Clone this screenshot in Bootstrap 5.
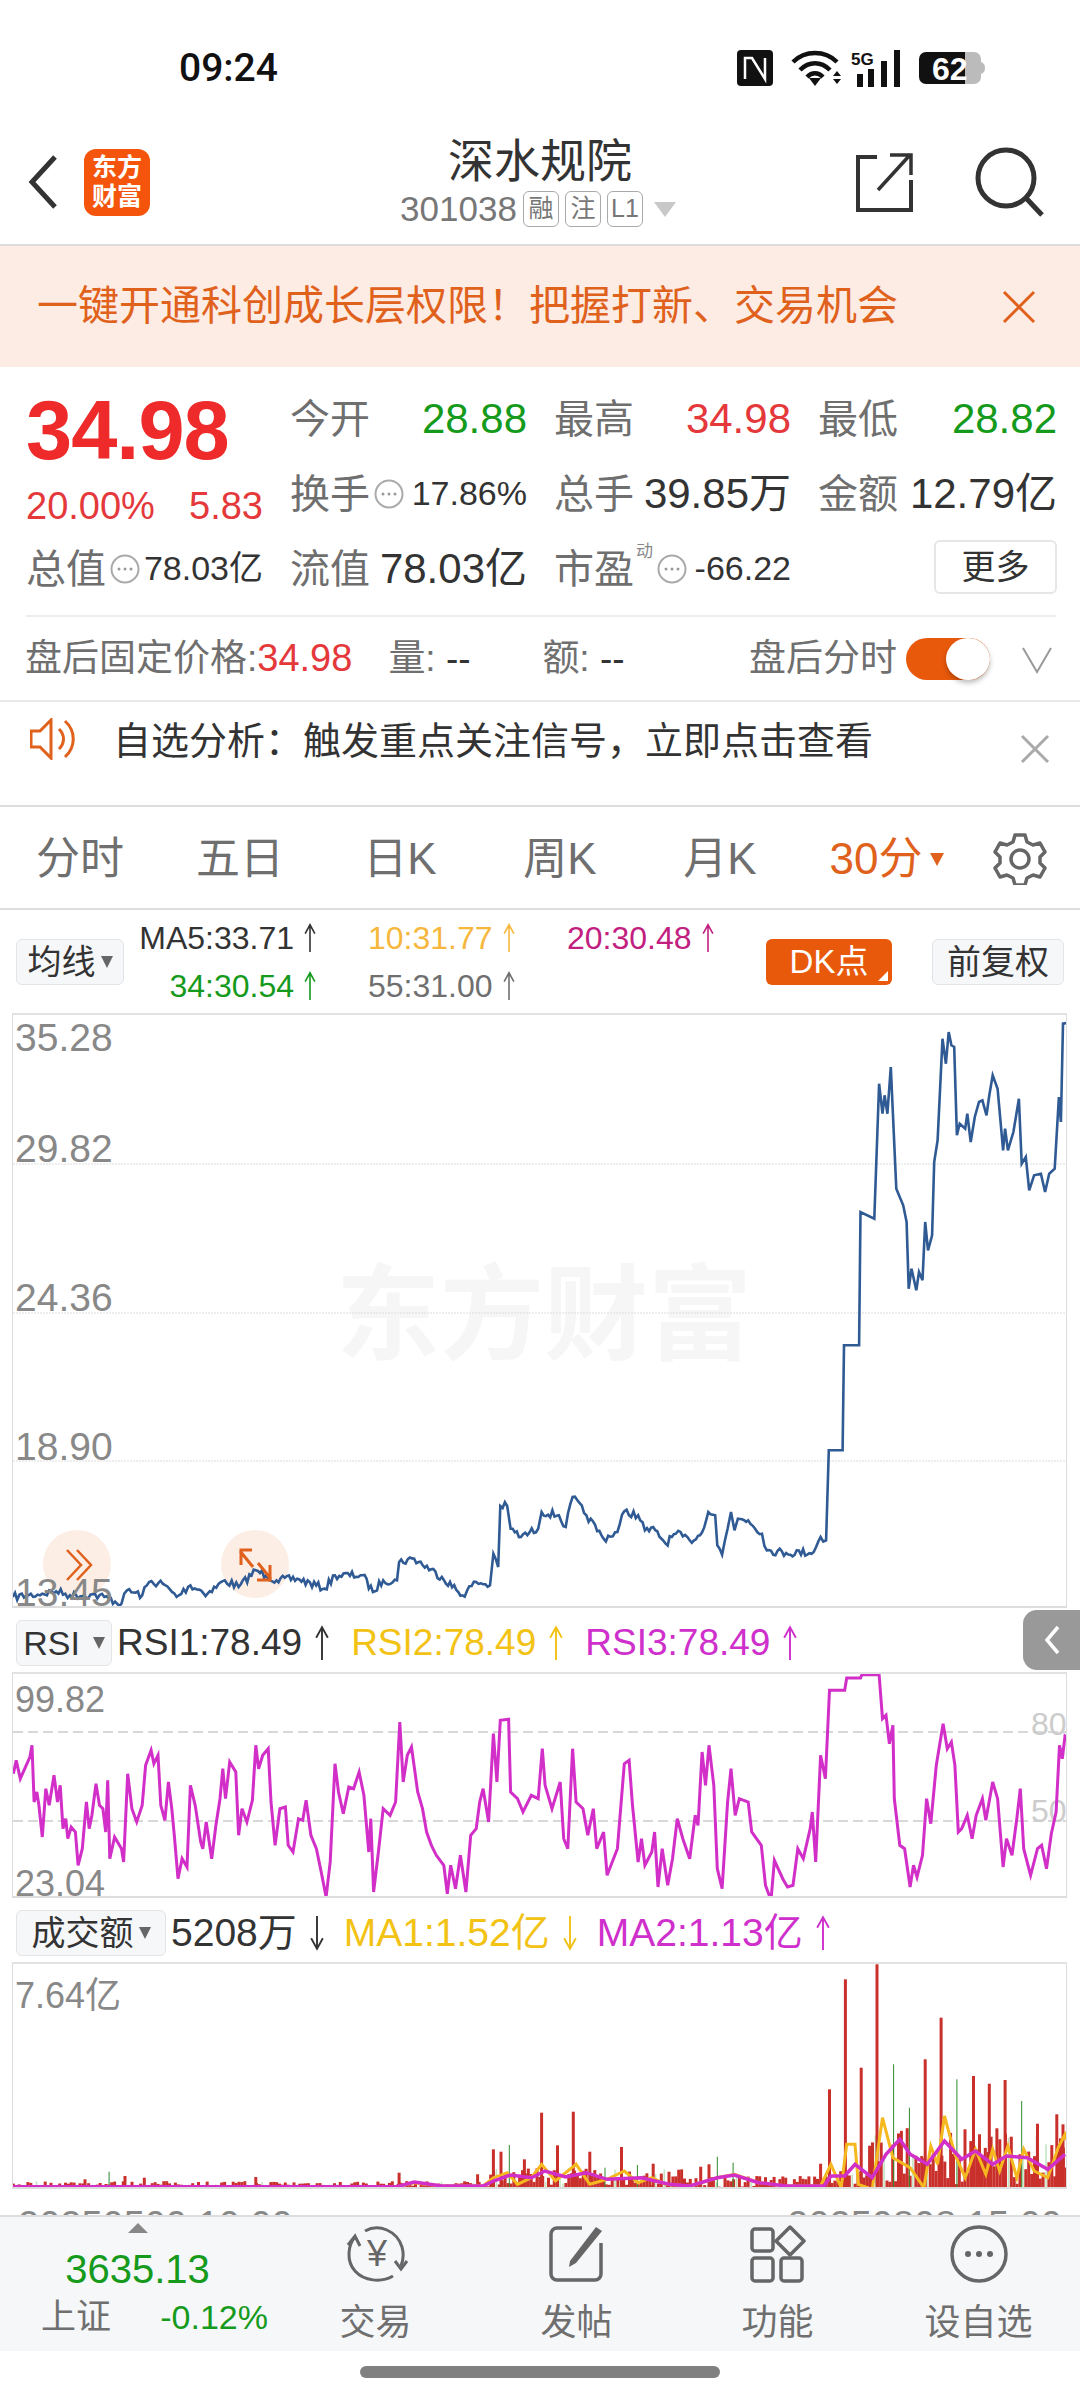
<!DOCTYPE html>
<html lang="zh-CN">
<head>
<meta charset="UTF-8">
<meta name="viewport" content="width=device-width, initial-scale=1.0">
<title>深水规院</title>
<link href="https://cdn.jsdelivr.net/npm/bootstrap@5.3.0/dist/css/bootstrap.min.css" rel="stylesheet">
<style>
body { width: 1080px; height: 2400px; margin: 0; overflow: hidden; background: #fff; color: #333; font-family: "Liberation Sans", "Noto Sans CJK SC", sans-serif; }
svg { display: block; flex: none; }
svg text { font-family: "Liberation Sans", "Noto Sans CJK SC", sans-serif; }
.c-red { color: #e5383b; }
.c-green { color: #159a1c; }
.c-gray { color: #6f6f6f; }
.c-dark { color: #333; }

.status-bar { height: 120px; padding: 50px 95px 0 179px; }
.clock { font-family: Roboto, "Liberation Sans", sans-serif; font-weight: 500; font-size: 39px; line-height: 36px; color: #111; }
.nfc-gap { margin-left: 18px; }

.head-bar { height: 126px; border-bottom: 2px solid #ddd; }
.head-side { width: 260px; flex: none; }
.back-wrap { padding-left: 28px; gap: 26px; }
.right-wrap { padding-right: 35px; gap: 60px; }
.logo-box { width: 66px; height: 67px; border-radius: 12px; background: #f4540c; color: #fff; font-size: 25px; line-height: 29px; font-weight: 700; text-align: center; padding-top: 4px; }
.head-title { font-size: 46px; line-height: 56px; color: #333; margin-top: -2px; }
.head-sub { font-size: 35px; line-height: 40px; color: #777; gap: 6px; padding-right: 4px; }
.tag-box { height: 36px; min-width: 36px; padding: 0 2px; border: 1px solid #aaa; border-radius: 6px; font-size: 25px; line-height: 33px; text-align: center; color: #777; }
.tag-arrow { width: 0; height: 0; border-left: 11px solid transparent; border-right: 11px solid transparent; border-top: 15px solid #c8c8c8; margin-left: 5px; }

.promo { height: 121px; background: #fcece4; color: #e0611c; font-size: 41px; padding: 0 44px 0 37px; white-space: nowrap; }

.q-grid { height: 250px; margin: 0 24px 0 26px; padding-top: 14px; border-bottom: 2px solid #eee; display: grid; grid-template-columns: 237px 237px 237px 239px; column-gap: 27px; grid-template-rows: 75px 75px 75px; }
.q-cell { display: flex; align-items: center; justify-content: space-between; font-size: 42px; white-space: nowrap; color: #333; }
.q-key { font-size: 40px; color: #6f6f6f; }
.q-sm { font-size: 34px; }
.q-price { grid-row: 1 / span 2; }
.price-big { font-size: 83px; line-height: 90px; font-weight: 700; color: #ee2a2a; margin-top: 5px; letter-spacing: -1px; }
.price-sub { font-size: 38px; line-height: 44px; margin-top: 8px; color: #e5383b; }
.sup-tag { font-size: 17px; color: #888; margin-top: -34px; margin-left: 2px; }
.more-btn { width: 123px; height: 54px; border: 2px solid #e6e6e6; border-radius: 6px; font-size: 34px; line-height: 50px; text-align: center; color: #333; margin-top: -3px; }

.after-row { height: 85px; padding: 0 28px 0 25px; border-bottom: 2px solid #e8e8e8; font-size: 37px; color: #6f6f6f; white-space: nowrap; }
.after-price { font-size: 38px; }
.after-vol { margin-left: 36px; width: 154px; }
.after-tail { margin-right: -2px; }
.slide-pill { width: 84px; height: 42px; margin-left: 11px; margin-right: 32px; border-radius: 21px; background: #e8590c; }
.slide-knob { top: 0; right: 0; width: 44px; height: 42px; border-radius: 50%; background: #fff; box-shadow: 0 3px 5px rgba(0, 0, 0, .25); }

.notice-row { height: 105px; padding: 16px 30px 0 30px; border-bottom: 2px solid #ddd; }
.notice-text { font-size: 38px; line-height: 46px; color: #333; margin-left: 33px; white-space: nowrap; }

.tab-row { height: 103px; display: grid; grid-template-columns: repeat(6, 160px) 120px; border-bottom: 2px solid #ddd; font-size: 44px; color: #6f6f6f; text-align: center; align-items: center; padding-top: 3px; }
.tab-on { color: #e0611c; padding-left: 14px; }
.tab-tri { width: 0; height: 0; border-left: 7px solid transparent; border-right: 7px solid transparent; border-top: 13px solid #e0611c; margin-left: 8px; }

.ma-row { height: 103px; padding: 0 16px; }
.pick-box { height: 46px; border: 1px solid #e2e4e7; border-radius: 6px; background: #f6f7f9; color: #333; font-size: 34px; line-height: 44px; white-space: nowrap; flex: none; }
.pick-ma { width: 108px; }
.pick-rsi { width: 96px; }
.pick-vol { width: 150px; }
.pick-tri { width: 0; height: 0; border-left: 6px solid transparent; border-right: 6px solid transparent; border-top: 12px solid #666; margin-left: 5px; }
.ma-grid { margin-left: 13px; display: grid; grid-template-columns: 180px 148px 148px; column-gap: 51px; grid-template-rows: 48px 48px; font-size: 32px; white-space: nowrap; }
.ma-item { display: flex; align-items: center; gap: 9px; }
.ma-first { justify-content: flex-end; }
.dk-btn { width: 126px; height: 46px; background: #e8590c; color: #fff; border-radius: 6px; font-size: 33px; line-height: 46px; text-align: center; }
.dk-tri { right: 4px; bottom: 4px; width: 0; height: 0; border-left: 10px solid transparent; border-bottom: 10px solid #fff; }
.fq-btn { width: 132px; margin-left: 40px; text-align: center; }

.plot-box { margin: 0 13px 0 12px; border: 2px solid #ddd; border-top-color: #e2e2e2; border-width: 2px 1px; overflow: hidden; }
.plot-main { height: 595px; }
.plot-rsi { height: 226px; }
.plot-vol { height: 227px; }
.ind-row { height: 64px; padding: 6px 0 0 16px; white-space: nowrap; font-size: 37px; }
.ind-vol { font-size: 39px; }
.ind-gap { gap: 5px; }
.val-arrow { gap: 12px; }
.val-next { margin-left: 16px; }
.ind-vol .val-next { margin-left: 14px; }
.c-y { color: #f2c215; }
.c-p { color: #cf2fcb; }
.c-o { color: #f6b73c; }
.c-m { color: #c2207f; }
.fold-tab { top: 2px; right: 0; width: 57px; height: 60px; background: #999; border-radius: 14px 0 0 14px; }

.date-row { height: 26px; overflow: hidden; padding: 17px 18px 0; font-size: 38px; line-height: 38px; color: #888; }

.foot-bar { height: 136px; background: #f6f7f9; border-top: 2px solid #ddd; display: grid; grid-template-columns: 275px repeat(4, 201px) 1px; }
.foot-index { position: relative; text-align: center; padding-top: 30px; }
.foot-val { font-size: 40px; line-height: 44px; }
.foot-low { font-size: 34px; line-height: 44px; margin-top: 4px; padding: 0 7px 0 41px; }
.foot-name { font-size: 35px; }
.foot-tri { left: 128px; top: 6px; width: 0; height: 0; border-left: 10px solid transparent; border-right: 10px solid transparent; border-bottom: 10px solid #888; }
.foot-item { display: flex; flex-direction: column; align-items: center; padding-top: 8px; font-size: 36px; line-height: 44px; color: #6f6f6f; white-space: nowrap; }
.foot-item svg { margin-bottom: 18px; }
.home-wrap { height: 48px; padding-top: 15px; }
.home-pill { width: 360px; height: 12px; border-radius: 6px; background: #808080; }
</style>
</head>
<body>
<svg width="0" height="0" class="position-absolute">
  <symbol id="up" viewBox="0 0 14 34"><path d="M7 33V2M1.5 12 7 2l5.5 10" fill="none" stroke="currentColor" stroke-width="1.8"/></symbol>
  <symbol id="down" viewBox="0 0 14 34"><path d="M7 1v31M1.5 22 7 32l5.5-10" fill="none" stroke="currentColor" stroke-width="1.8"/></symbol>
  <symbol id="dots" viewBox="0 0 30 30"><circle cx="15" cy="15" r="13.5" fill="none" stroke="#aaa" stroke-width="2"/><circle cx="9" cy="15" r="1.5" fill="#999"/><circle cx="15" cy="15" r="1.5" fill="#999"/><circle cx="21" cy="15" r="1.5" fill="#999"/></symbol>
</svg>

<!-- status bar -->
<div class="status-bar d-flex justify-content-between">
  <div class="clock">09:24</div>
  <div class="d-flex align-items-start">
    <svg width="36" height="36" viewBox="0 0 36 36"><rect width="36" height="36" rx="4" fill="#111"/><path d="M8 29V8l7 0 13 21V8" fill="none" stroke="#fff" stroke-width="2.5"/></svg>
    <svg class="nfc-gap" width="52" height="36" viewBox="0 0 52 36"><g fill="none" stroke="#111" stroke-width="4.5"><path d="M2 12C14 0 34 0 46 12"/><path d="M9 20C18 11 30 11 39 20"/><path d="M16 27c5-5 11-5 16 0"/></g><path d="M24 36 18 28h12z" fill="#111"/><path d="M46 21l4 5h-8zM46 34l4-5h-8z" fill="#111"/></svg>
    <svg class="ms-2" width="52" height="37" viewBox="0 0 52 37"><text x="0" y="15" font-size="17" font-weight="700" fill="#111">5G</text><g fill="#111"><rect x="6" y="24" width="6" height="13"/><rect x="17" y="19" width="6" height="18"/><rect x="30" y="11" width="6" height="26"/><rect x="43" y="0" width="6" height="37"/></g></svg>
    <svg class="ms-3" width="66" height="36" viewBox="0 0 66 36"><rect x="40" y="2" width="22" height="32" rx="7" fill="#bbb"/><path d="M62 12c3 1 4 3 4 6s-1 5-4 6z" fill="#bbb"/><path d="M7 2h39v32H7a7 7 0 0 1-7-7V9a7 7 0 0 1 7-7z" fill="#111"/><text x="13" y="30" font-size="32" font-weight="700" fill="#fff">62</text></svg>
  </div>
</div>

<!-- header -->
<div class="head-bar d-flex align-items-center">
  <div class="head-side d-flex align-items-center back-wrap">
    <svg width="30" height="54" viewBox="0 0 30 54"><path d="M27 2 4 27l23 25" fill="none" stroke="#333" stroke-width="5"/></svg>
    <div class="logo-box">东方<br>财富</div>
  </div>
  <div class="flex-grow-1 text-center">
    <div class="head-title">深水规院</div>
    <div class="head-sub d-flex justify-content-center align-items-center">
      <span>301038</span><span class="tag-box">融</span><span class="tag-box">注</span><span class="tag-box">L1</span><span class="tag-arrow"></span>
    </div>
  </div>
  <div class="head-side d-flex align-items-center justify-content-end right-wrap">
    <svg width="60" height="60" viewBox="0 0 60 60"><path d="M22 5H3v53h53V28" fill="none" stroke="#333" stroke-width="4"/><path d="M23 38 54 4M35 3h21v20" fill="none" stroke="#333" stroke-width="3.5"/></svg>
    <svg width="70" height="70" viewBox="0 0 70 70"><circle cx="31" cy="31" r="28" fill="none" stroke="#333" stroke-width="5"/><path d="M51 51 67 68" stroke="#333" stroke-width="5"/></svg>
  </div>
</div>

<!-- promo -->
<div class="promo d-flex align-items-center justify-content-between">
  <span>一键开通科创成长层权限&#xFF01;把握打新、交易机会</span>
  <svg width="34" height="34" viewBox="0 0 34 34"><path d="M2 2l30 30M32 2 2 32" stroke="#e0611c" stroke-width="3"/></svg>
</div>

<!-- quote block -->
<div class="q-grid">
  <div class="q-price">
    <div class="price-big">34.98</div>
    <div class="price-sub d-flex justify-content-between"><span>20.00%</span><span>5.83</span></div>
  </div>
  <div class="q-cell"><span class="q-key">今开</span><span class="c-green">28.88</span></div>
  <div class="q-cell"><span class="q-key">最高</span><span class="c-red">34.98</span></div>
  <div class="q-cell"><span class="q-key">最低</span><span class="c-green">28.82</span></div>
  <div class="q-cell"><span class="q-key">换手</span><svg width="30" height="30" class="me-auto ms-1"><use href="#dots"/></svg><span class="q-sm">17.86%</span></div>
  <div class="q-cell"><span class="q-key">总手</span><span>39.85万</span></div>
  <div class="q-cell"><span class="q-key">金额</span><span>12.79亿</span></div>
  <div class="q-cell"><span class="q-key">总值</span><svg width="30" height="30" class="me-auto ms-1"><use href="#dots"/></svg><span class="q-sm">78.03亿</span></div>
  <div class="q-cell"><span class="q-key">流值</span><span>78.03亿</span></div>
  <div class="q-cell"><span class="q-key">市盈</span><span class="sup-tag">动</span><svg width="30" height="30" class="me-auto ms-1"><use href="#dots"/></svg><span class="q-sm">-66.22</span></div>
  <div class="q-cell justify-content-end"><div class="more-btn">更多</div></div>
</div>

<!-- after hours -->
<div class="after-row d-flex align-items-center">
  <span>盘后固定价格:</span><span class="c-red after-price">34.98</span>
  <span class="after-vol">量: <span class="c-dark">--</span></span>
  <span>额: <span class="c-dark">--</span></span>
  <span class="ms-auto after-tail">盘后分时</span>
  <div class="slide-pill position-relative flex-shrink-0"><div class="slide-knob position-absolute"></div></div>
  <svg width="30" height="38" viewBox="0 0 30 38"><path d="M1 8l14 24L29 8" fill="none" stroke="#999" stroke-width="2"/></svg>
</div>

<!-- notice -->
<div class="notice-row d-flex align-items-start">
  <svg width="50" height="42" viewBox="0 0 50 42"><path d="M1 13h9L21 2v38L10 29H1z" fill="none" stroke="#e0611c" stroke-width="3"/><path d="M29 11c6 6 6 14 0 20M35 3c11 10 11 26 0 36" fill="none" stroke="#e0611c" stroke-width="3"/></svg>
  <span class="notice-text">自选分析&#xFF1A;触发重点关注信号&#xFF0C;立即点击查看</span>
  <svg class="ms-auto mt-3" width="30" height="30" viewBox="0 0 30 30"><path d="M2 2l26 26M28 2 2 28" stroke="#aaa" stroke-width="3"/></svg>
</div>

<!-- period tabs -->
<div class="tab-row">
  <div>分时</div><div>五日</div><div>日K</div><div>周K</div><div>月K</div>
  <div class="tab-on d-flex align-items-center justify-content-center">30分<span class="tab-tri"></span></div>
  <div class="d-flex justify-content-center">
    <svg width="54" height="52" viewBox="0 0 54 52"><path d="M22 2h10l2 7 6 3 7-2 5 9-5 5v6l5 5-5 9-7-2-6 3-2 7H22l-2-7-6-3-7 2-5-9 5-5v-6l-5-5 5-9 7 2 6-3z" fill="none" stroke="#666" stroke-width="3.5" stroke-linejoin="round"/><circle cx="27" cy="26" r="9" fill="none" stroke="#666" stroke-width="3.5"/></svg>
  </div>
</div>

<!-- moving averages -->
<div class="ma-row d-flex align-items-center">
  <div class="pick-box pick-ma d-flex align-items-center justify-content-center"><span>均线</span><span class="pick-tri"></span></div>
  <div class="ma-grid">
    <div class="ma-item ma-first c-dark">MA5:33.71<svg width="14" height="30"><use href="#up"/></svg></div>
    <div class="ma-item c-o">10:31.77<svg width="14" height="30"><use href="#up"/></svg></div>
    <div class="ma-item c-m">20:30.48<svg width="14" height="30"><use href="#up"/></svg></div>
    <div class="ma-item ma-first c-green">34:30.54<svg width="14" height="30"><use href="#up"/></svg></div>
    <div class="ma-item c-gray">55:31.00<svg width="14" height="30"><use href="#up"/></svg></div>
  </div>
  <div class="dk-btn position-relative ms-auto">DK点<span class="dk-tri position-absolute"></span></div>
  <div class="pick-box fq-btn">前复权</div>
</div>

<!-- price chart -->
<div class="plot-box plot-main">
  <svg id="chartMain" width="1055" height="595" viewBox="12 1013 1055 595">
    <text x="335" y="1350" font-size="104" font-weight="700" fill="#f6f6f6">东方财富</text>
    <g stroke="#ddd" stroke-width="1" stroke-dasharray="2 1"><path d="M12 1162H1067M12 1311H1067M12 1459H1067"/></g>
    <circle cx="76" cy="1562" r="34" fill="#fdeee5"/>
    <circle cx="254" cy="1562" r="34" fill="#fdeee5"/>
    <polyline id="mainLine" fill="none" stroke="#2f5a94" stroke-width="2.6"/>
    <path d="M66 1548l14 15-14 15M76 1548l14 15-14 15" fill="none" stroke="#e0611c" stroke-width="2.5"/>
    <path d="M240 1563v-15h11M239 1549l13 16M269 1563v15h-13M270 1577l-13-16" fill="none" stroke="#e0611c" stroke-width="3"/>
    <g font-size="39" fill="#888">
      <text x="14" y="1049">35.28</text><text x="14" y="1160">29.82</text><text x="14" y="1309">24.36</text><text x="14" y="1458">18.90</text><text x="14" y="1604">13.45</text>
    </g>
  </svg>
</div>

<!-- RSI -->
<div class="ind-row position-relative d-flex align-items-center ind-gap">
  <div class="pick-box pick-rsi d-flex align-items-center justify-content-center"><span class="me-2">RSI</span><span class="pick-tri"></span></div>
  <div class="d-flex align-items-center val-arrow c-dark">RSI1:78.49<svg width="16" height="36"><use href="#up"/></svg></div>
  <div class="d-flex align-items-center val-arrow c-y val-next">RSI2:78.49<svg width="16" height="36"><use href="#up"/></svg></div>
  <div class="d-flex align-items-center val-arrow c-p val-next">RSI3:78.49<svg width="16" height="36"><use href="#up"/></svg></div>
  <div class="fold-tab position-absolute d-flex align-items-center justify-content-center">
    <svg width="16" height="30" viewBox="0 0 16 30"><path d="M14 2 3 15l11 13" fill="none" stroke="#fff" stroke-width="3.5"/></svg>
  </div>
</div>
<div class="plot-box plot-rsi">
  <svg width="1055" height="226" viewBox="12 1672 1055 226">
    <path d="M12 1730H1067M12 1819H1067" stroke="#ccc" stroke-width="1.5" stroke-dasharray="10 5"/>
    <text x="1030" y="1733" font-size="32" fill="#ccc">80</text>
    <text x="1030" y="1820" font-size="32" fill="#ccc">50</text>
    <polyline id="rsiLine" fill="none" stroke="#d12fc8" stroke-width="3"/>
    <text x="14" y="1710" font-size="36" fill="#888">99.82</text>
    <text x="14" y="1894" font-size="36" fill="#888">23.04</text>
  </svg>
</div>

<!-- volume -->
<div class="ind-row ind-vol d-flex align-items-center ind-gap">
  <div class="pick-box pick-vol d-flex align-items-center justify-content-center"><span>成交额</span><span class="pick-tri"></span></div>
  <div class="d-flex align-items-center val-arrow c-dark">5208万<svg width="16" height="36"><use href="#down"/></svg></div>
  <div class="d-flex align-items-center val-arrow c-y val-next">MA1:1.52亿<svg width="16" height="36"><use href="#down"/></svg></div>
  <div class="d-flex align-items-center val-arrow c-p val-next">MA2:1.13亿<svg width="16" height="36"><use href="#up"/></svg></div>
</div>
<div class="plot-box plot-vol">
  <svg width="1055" height="227" viewBox="12 1963 1055 227">
    <g id="volBars"></g>
    <polyline id="volY" fill="none" stroke="#f5b81e" stroke-width="3"/>
    <polyline id="volM" fill="none" stroke="#d12fc8" stroke-width="3.5"/>
    <text x="14" y="2007" font-size="36" fill="#888">7.64亿</text>
  </svg>
</div>
<div class="date-row d-flex justify-content-between"><span>20250509 10:00</span><span>20250808 15:00</span></div>

<!-- bottom bar -->
<div class="foot-bar">
  <div class="foot-index">
    <span class="foot-tri position-absolute"></span>
    <div class="foot-val c-green">3635.13</div>
    <div class="foot-low d-flex justify-content-between"><span class="c-gray foot-name">上证</span><span class="c-green">-0.12%</span></div>
  </div>
  <div class="foot-item">
    <svg width="66" height="58" viewBox="0 0 66 58"><path d="M12 12C5 20 3 36 12 46c9 10 26 12 38 5" fill="none" stroke="#666" stroke-width="3"/><path d="M22 6c14-8 32 0 37 16 2 7 1 14-1 19" fill="none" stroke="#666" stroke-width="3"/><path d="M5 20l7-9 5 10M52 36l6 8 6-8" fill="none" stroke="#666" stroke-width="3"/><text x="34" y="41" font-size="36" fill="#666" text-anchor="middle">¥</text></svg>
    <span>交易</span>
  </div>
  <div class="foot-item">
    <svg width="58" height="58" viewBox="0 0 58 58"><path d="M34 3H9a6 6 0 0 0-6 6v40a6 6 0 0 0 6 6h38a6 6 0 0 0 6-6V18" fill="none" stroke="#666" stroke-width="3.5"/><path d="M22 36 48 2l6 4-26 32-7 4z" fill="#666"/></svg>
    <span>发帖</span>
  </div>
  <div class="foot-item">
    <svg width="56" height="58" viewBox="0 0 56 58"><g fill="none" stroke="#666" stroke-width="3.5"><rect x="2" y="4" width="21" height="22" rx="3"/><path d="M40 2l14 14-14 14-14-14z" stroke-linejoin="round"/><rect x="2" y="33" width="21" height="23" rx="3"/><rect x="31" y="33" width="21" height="23" rx="3"/></g></svg>
    <span>功能</span>
  </div>
  <div class="foot-item">
    <svg width="58" height="58" viewBox="0 0 58 58"><circle cx="29" cy="29" r="27" fill="none" stroke="#666" stroke-width="3.5"/><circle cx="18" cy="29" r="3" fill="#666"/><circle cx="29" cy="29" r="3" fill="#666"/><circle cx="40" cy="29" r="3" fill="#666"/></svg>
    <span>设自选</span>
  </div>
</div>
<div class="home-wrap d-flex justify-content-center"><div class="home-pill"></div></div>

<script>
// traced points are in zoom coords: x / 1.452, y / 3 + offset gives page px
const sx = 1 / 1.452;
let seed = 7;
function rnd() { seed = (seed * 16807) % 2147483647; return seed / 2147483647; }

function toPage(list, off) {
    let out = [];
    for (let i = 0; i < list.length; i += 2) out.push([list[i] * sx, list[i + 1] / 3 + off]);
    return out;
}
function fmt(pts) { return pts.map(p => p[0].toFixed(1) + "," + p[1].toFixed(1)).join(" "); }

// price line, the noisy left part gets small jitter between traced points
const mainA = toPage([17,1125,40,1120,60,1115,80,1108,100,1120,130,1118,150,1125,175,1145,183,1105,205,1120,215,1080,235,1085,255,1125,275,1090,300,1115,325,1075,345,1095,370,1045,385,1060,400,1075,430,1070,470,1100,485,1060,525,1060,540,1110,555,1075,575,1075,578,1020,600,1010,640,1065,670,1120,690,1080,710,1090,715,995,722,1035,725,852,735,852,740,920,755,945,780,920,785,870,810,880,820,915,830,825,850,880,875,950,895,930,905,868,925,880,935,925,950,925,965,965,980,935,1000,955,1015,940,1027,870,1037,880,1040,970,1047,998,1055,920,1060,870,1065,925,1070,890,1085,895,1105,935,1112,985,1140,993,1180,990,1190,945,1198,955], 1220);
let mainPts = [];
mainA.forEach((p, i) => {
    mainPts.push(p);
    const n = mainA[i + 1];
    if (!n || n[0] - p[0] < 4) return;
    const steps = Math.floor((n[0] - p[0]) / 2);
    for (let k = 1; k < steps; k++) {
        const t = k / steps;
        mainPts.push([p[0] + (n[0] - p[0]) * t, p[1] + (n[1] - p[1]) * t + (rnd() - .5) * 8]);
    }
});
mainPts = mainPts.concat(toPage([1202,685,1222,685,1224,370,1246,370,1248,-30], 1220));
mainPts = mainPts.concat(toPage([1268,1190,1275,785,1280,875,1283,820,1287,875,1292,735,1300,1100,1310,1150], 820));
mainPts = mainPts.concat(toPage([1315,0,1318,200,1322,140,1329,205,1333,150,1338,175,1342,0,1346,85,1352,40], 1220));
mainPts = mainPts.concat(toPage([1355,1020,1360,955,1367,650,1372,725,1376,630,1380,670,1384,675,1388,940,1392,905,1400,920,1403,875,1408,960,1414,885,1420,840,1425,835,1431,880,1435,820,1440,760,1447,800,1455,985,1458,920,1462,985,1470,930,1478,830,1482,1025,1488,1005,1493,1105,1500,1060,1510,1055,1516,1110,1522,1055,1530,1040,1536,825,1539,900,1542,605,1548,603], 820));
document.getElementById("mainLine").setAttribute("points", fmt(mainPts));

// RSI
const rsi = [18,575,22,535,28,590,42,525,45,490,48,660,52,630,55,670,60,765,65,620,70,670,77,580,82,660,86,610,90,740,94,710,97,770,102,735,108,750,112,850,118,800,124,660,128,740,132,700,138,605,143,670,148,680,152,750,155,595,158,830,165,765,175,800,178,840,184,575,190,680,197,720,205,670,210,550,218,505,222,545,228,520,232,670,238,715,243,600,248,680,252,770,257,890,263,830,270,855,275,610,282,670,290,780,293,800,298,720,306,830,312,730,318,650,322,560,326,650,332,540,341,570,345,760,350,680,357,720,365,655,370,490,374,560,380,520,388,500,392,660,398,790,405,680,413,675,417,790,424,810,432,710,438,715,443,655,450,760,458,800,465,870,472,945,478,840,485,545,490,630,497,695,505,615,512,620,520,570,527,640,534,810,537,710,541,930,548,810,555,680,565,700,573,660,579,420,584,600,590,520,596,495,605,630,612,680,618,750,625,790,632,820,643,850,648,935,653,850,660,920,667,820,675,930,682,760,690,740,695,660,700,620,708,720,715,455,720,600,725,415,737,412,740,630,750,650,758,690,770,640,780,650,786,500,790,610,800,680,812,600,817,770,823,800,830,500,835,660,845,680,852,760,860,680,865,800,875,750,880,880,895,800,905,545,912,535,917,670,925,840,930,770,935,850,945,810,949,750,954,915,960,800,968,910,975,830,982,710,990,770,1000,830,1008,700,1012,730,1018,510,1023,610,1028,490,1035,610,1040,860,1047,920,1055,660,1060,560,1066,700,1072,650,1085,660,1090,750,1104,790,1110,910,1118,955,1123,835,1135,890,1142,915,1150,910,1157,800,1165,830,1175,740,1178,690,1183,840,1190,520,1197,590,1203,325,1225,325,1228,288,1248,288,1250,278,1275,278,1280,410,1285,400,1290,485,1295,430,1297,650,1305,790,1312,800,1320,915,1325,850,1330,885,1338,820,1344,650,1350,725,1358,550,1368,425,1374,500,1380,480,1385,550,1390,750,1395,740,1403,700,1410,770,1416,700,1425,650,1430,715,1440,600,1447,650,1455,855,1460,770,1468,820,1475,710,1480,620,1485,800,1495,880,1505,800,1511,790,1518,860,1525,755,1532,690,1537,490,1541,530,1545,462,1550,470];
document.getElementById("rsiLine").setAttribute("points", fmt(toPage(rsi, 1580)));

// volume bars
const spikes = [[1203,565],[1226,235],[1249,500],[1272,190],[1342,475],[1365,350],[1412,525],[1435,548],[1458,537],[1505,668],[1533,640],[1542,670],[785,635],[831,632],[715,745],[726,752],[760,775],[808,733],[855,752],[901,738],[947,788],[970,812],[1016,797],[1028,790],[1190,788],[692,820],[578,815],[180,825],[122,835],[208,830],[370,828]];
const greens = [[1296,490],[1388,535],[1482,600],[1319,620],[738,732],[1040,767],[1063,785],[157,812],[877,800],[924,792]];
let bars = "";
function bar(zx, top, color, w) {
    const y = top / 3 + 1900;
    bars += `<rect x="${(zx * sx - w / 2).toFixed(1)}" y="${y.toFixed(1)}" width="${w}" height="${(2190 - y).toFixed(1)}" fill="${color}"/>`;
}
for (let zx = 18; zx < 1550; zx += 4.2) {
    let h = 12 + rnd() * 18;
    if (zx > 710 && zx < 1190) h = 18 + rnd() * 50;
    if (zx > 1000 && zx < 1190) h = 12 + rnd() * 36;
    if (zx >= 1190) h = 20 + rnd() * (zx > 1260 ? 170 : 40);
    if (rnd() < .1) bar(zx, 870 - h, "#bfe3bf", 1.5); else bar(zx, 870 - h, "#c9302c", 3);
}
spikes.forEach(s => bar(s[0], s[1], "#c9302c", 3));
greens.forEach(g => bar(g[0], g[1], "#2e8b2e", 1));
document.getElementById("volBars").innerHTML = bars;

const volY = [17,858,575,857,600,845,640,855,700,855,715,830,735,815,750,850,770,830,785,790,805,840,835,790,855,850,880,835,905,810,925,845,945,830,965,850,1000,855,1040,830,1065,820,1100,845,1140,855,1190,855,1205,790,1220,860,1228,730,1240,730,1245,850,1265,865,1280,650,1295,770,1320,800,1340,860,1350,735,1360,790,1370,645,1385,760,1400,830,1415,745,1430,820,1440,745,1450,810,1462,735,1475,830,1485,745,1500,810,1520,830,1535,740,1545,700,1550,730];
const volM = [17,857,575,857,600,843,640,855,700,855,715,840,740,822,770,830,790,810,820,828,850,815,880,835,930,830,970,850,1000,855,1040,830,1065,822,1100,845,1140,855,1195,855,1205,825,1225,825,1240,790,1265,830,1285,760,1305,715,1320,760,1345,790,1370,720,1395,775,1415,750,1440,790,1460,765,1490,770,1520,805,1545,760];
document.getElementById("volY").setAttribute("points", fmt(toPage(volY, 1900)));
document.getElementById("volM").setAttribute("points", fmt(toPage(volM, 1900)));
</script>
<script src="https://cdn.jsdelivr.net/npm/bootstrap@5.3.0/dist/js/bootstrap.bundle.min.js"></script>
</body>
</html>
